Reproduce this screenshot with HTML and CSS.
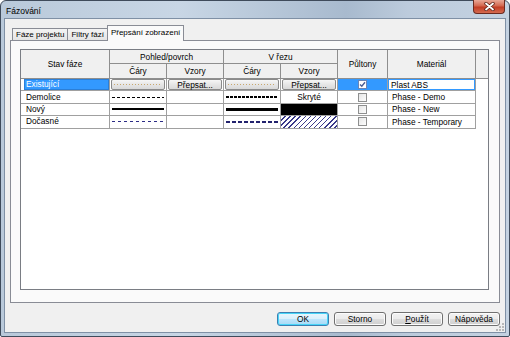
FILE: index.html
```html
<!DOCTYPE html>
<html lang="cs">
<head>
    <meta charset="UTF-8">
    <title>Fázování</title>
    <link rel="stylesheet" href="styles.css">
</head>
<body>
    <div class="window">
        <div class="titlebar">
            <span class="title">Fázování</span>
            <div class="close">
                <svg width="11" height="9" viewBox="0 0 11 9">
                    <path d="M2 1.5 L9 7.5 M9 1.5 L2 7.5" stroke="#5b2219" stroke-width="3.4" stroke-linecap="round"/>
                    <path d="M2 1.5 L9 7.5 M9 1.5 L2 7.5" stroke="#ffffff" stroke-width="1.8" stroke-linecap="round"/>
                </svg>
            </div>
        </div>

        <div class="client">
            <div class="tabs">
                <div class="tab">Fáze projektu</div>
                <div class="tab">Filtry fází</div>
                <div class="tab active">Přepsání zobrazení</div>
            </div>

            <div class="panel">
                <div class="grid">
                    <table>
                        <colgroup>
                            <col class="c-name">
                            <col class="c-std">
                            <col class="c-std">
                            <col class="c-std">
                            <col class="c-std">
                            <col class="c-half">
                            <col class="c-mat">
                            <col>
                        </colgroup>
                        <thead>
                            <tr class="head-1">
                                <th rowspan="2">Stav fáze</th>
                                <th colspan="2">Pohled/povrch</th>
                                <th colspan="2">V řezu</th>
                                <th rowspan="2">Půltony</th>
                                <th rowspan="2">Materiál</th>
                                <th rowspan="2" class="filler"></th>
                            </tr>
                            <tr class="head-2">
                                <th>Čáry</th>
                                <th>Vzory</th>
                                <th>Čáry</th>
                                <th>Vzory</th>
                            </tr>
                        </thead>
                        <tbody>
                            <tr>
                                <td class="name"><div class="sel">Existující</div></td>
                                <td><div class="cell-btn"><div class="ln ln-dot"></div></div></td>
                                <td><div class="cell-btn">Přepsat...</div></td>
                                <td><div class="cell-btn"><div class="ln ln-dot"></div></div></td>
                                <td><div class="cell-btn">Přepsat...</div></td>
                                <td class="check selected">
                                    <span class="cb cb-focus">
                                        <svg width="7" height="7" viewBox="0 0 7 7"><path d="M1 3.4 L2.8 5.3 L6 1.2" fill="none" stroke="#4c5f95" stroke-width="1.4"/></svg>
                                    </span>
                                </td>
                                <td class="mat editing">Plast ABS</td>
                                <td class="empty"></td>
                            </tr>
                            <tr>
                                <td class="name"><div>Demolice</div></td>
                                <td class="line"><div class="ln ln-dash"></div></td>
                                <td></td>
                                <td class="line"><div class="ln ln-dash-bold"></div></td>
                                <td class="center">Skryté</td>
                                <td class="check"><span class="cb"></span></td>
                                <td class="mat">Phase - Demo</td>
                                <td class="empty"></td>
                            </tr>
                            <tr>
                                <td class="name"><div>Nový</div></td>
                                <td class="line"><div class="ln ln-solid"></div></td>
                                <td></td>
                                <td class="line"><div class="ln ln-solid-bold"></div></td>
                                <td class="fill-black"></td>
                                <td class="check"><span class="cb"></span></td>
                                <td class="mat">Phase - New</td>
                                <td class="empty"></td>
                            </tr>
                            <tr>
                                <td class="name"><div>Dočasné</div></td>
                                <td class="line"><div class="ln ln-navy"></div></td>
                                <td></td>
                                <td class="line"><div class="ln ln-navy-bold"></div></td>
                                <td class="hatch"></td>
                                <td class="check"><span class="cb"></span></td>
                                <td class="mat">Phase - Temporary</td>
                                <td class="empty"></td>
                            </tr>
                        </tbody>
                    </table>
                </div>
            </div>

            <div class="buttons">
                <button class="btn default">OK</button>
                <button class="btn">Storno</button>
                <button class="btn"><u>P</u>oužít</button>
                <button class="btn">Nápověda</button>
            </div>

            <svg class="grip" width="8" height="8" viewBox="0 0 8 8">
                <rect x="6" y="0" width="2" height="2" fill="#b8b8b8"/>
                <rect x="3" y="3" width="2" height="2" fill="#b8b8b8"/>
                <rect x="6" y="3" width="2" height="2" fill="#b8b8b8"/>
                <rect x="0" y="6" width="2" height="2" fill="#b8b8b8"/>
                <rect x="3" y="6" width="2" height="2" fill="#b8b8b8"/>
                <rect x="6" y="6" width="2" height="2" fill="#b8b8b8"/>
            </svg>
        </div>
    </div>
</body>
</html>
```

FILE: styles.css
```css
body {
    margin: 0;
    font-family: "Liberation Sans", Arial, sans-serif;
    font-size: 8.3px;
    color: #000;
}
.window {
    width: 510px;
    height: 337px;
    box-sizing: border-box;
    border: 1px solid #3f4b5b;
    border-radius: 6px 6px 2px 2px;
    background: linear-gradient(90deg, #b9c9da, #c8d6e5 35%, #a8bace 68%, #bccbdc 80%, #c4d2e1);
    display: flex;
    flex-direction: column;
}
.titlebar {
    height: 17px;
    display: flex;
    align-items: flex-start;
}
.title {
    padding: 5px 0 0 5px;
    font-size: 8.5px;
}
.close {
    margin-left: auto;
    margin-right: 4px;
    width: 32px;
    height: 14px;
    margin-top: -1px;
    box-sizing: border-box;
    border: 1px solid #6a2a20;
    border-top: none;
    border-radius: 0 0 4px 4px;
    background: linear-gradient(#e9a897, #d3674f 45%, #c23c24 55%, #d46b50);
    display: flex;
    align-items: center;
    justify-content: center;
}
.client {
    flex: 1;
    margin: 0 3px 3px;
    border: 1px solid #7f90a5;
    background: #f0f0f0;
    display: flex;
    flex-direction: column;
    padding: 6px 5px;
    position: relative;
}
.tabs {
    height: 15px;
    display: flex;
    align-items: flex-end;
    padding-left: 2px;
    font-size: 8px;
}
.tab {
    height: 12px;
    box-sizing: border-box;
    padding: 0 3px;
    border: 1px solid #898c95;
    border-bottom: none;
    border-right: none;
    background: linear-gradient(#f4f4f4, #e4e4e4);
    display: flex;
    align-items: center;
    white-space: nowrap;
}
.tab + .tab.active {
    border-left: 1px solid #898c95;
}
.tab.active {
    height: 16px;
    margin-bottom: -1px;
    border-right: 1px solid #898c95;
    background: #fafafa;
    padding: 0 3px 2px;
    position: relative;
    z-index: 1;
}
.panel {
    flex: 1;
    border: 1px solid #898c95;
    background: #fafafa;
    padding: 8px 10px 12px 9px;
    display: flex;
}
.grid {
    flex: 1;
    border: 1px solid #7a7d84;
    background: #fff;
}
table {
    width: 100%;
    table-layout: fixed;
    border-collapse: separate;
    border-spacing: 0;
}
.c-name { width: 89px; }
.c-std { width: 57px; }
.c-half { width: 50px; }
.c-mat { width: 88px; }
th, td {
    box-sizing: border-box;
    padding: 0;
    border-right: 1px solid #a0a0a0;
    border-bottom: 1px solid #a0a0a0;
    font-weight: normal;
    white-space: nowrap;
    overflow: hidden;
}
th {
    background: #f0f0f0;
    text-align: center;
    border-color: #8e8e8e;
}
.head-1 { height: 14px; }
.head-2 { height: 15px; }
tbody tr { height: 12.4px; }
td.empty {
    border: none;
}
th.filler {
    border-right: none;
}
.name {
    padding: 0 0 0 3px;
}
.name div {
    padding-left: 2px;
    height: 11px;
    line-height: 11px;
}
.name .sel {
    background: #3399ff;
    color: #fff;
    box-shadow: inset 0 0 0 1px #2b7fd8;
}
.line {
    padding: 0 2px;
}
.ln {
    width: 100%;
}
.ln-dot {
    height: 1px;
    background: repeating-linear-gradient(90deg, #c9a86e 0 1px, transparent 1px 3px);
}
.ln-dash {
    height: 1px;
    background: repeating-linear-gradient(90deg, #000 0 3px, transparent 3px 5px);
}
.ln-dash-bold {
    height: 2px;
    background: repeating-linear-gradient(90deg, #000 0 3px, transparent 3px 4px);
}
.ln-solid {
    height: 2px;
    background: #000;
}
.ln-solid-bold {
    height: 3px;
    background: #000;
}
.ln-navy {
    height: 1px;
    background: repeating-linear-gradient(90deg, #2c2c86 0 3px, transparent 3px 6px);
}
.ln-navy-bold {
    height: 2px;
    background: repeating-linear-gradient(90deg, #22226e 0 4px, transparent 4px 6px);
}
.cell-btn {
    height: 11px;
    box-sizing: border-box;
    margin: 0 1px;
    border: 1px solid #8a8a8a;
    border-radius: 2px;
    background: linear-gradient(#f6f6f6, #e6e6e6 50%, #d9d9d9);
    display: flex;
    align-items: center;
    justify-content: center;
    padding: 0 2px;
}
.center {
    text-align: center;
}
.fill-black {
    background: #000;
}
.hatch {
    background: repeating-linear-gradient(135deg, #fff 0 2.6px, #3a3a8a 2.6px 3.6px);
}
.check {
    text-align: center;
    line-height: 0;
}
.check.selected {
    background: #3399ff;
}
.cb {
    display: inline-block;
    width: 9px;
    height: 9px;
    box-sizing: border-box;
    border: 1px solid #8e8f8f;
    background: linear-gradient(135deg, #e6e6e6, #fdfdfd);
    vertical-align: middle;
}
.cb-focus {
    border-color: #6a85b5;
    background: #fff;
}
.cb svg {
    display: block;
}
.mat {
    padding-left: 4px;
}
.mat.editing {
    box-shadow: inset 0 0 0 1px #3399ff;
    padding-left: 3px;
}
.buttons {
    margin-top: 9px;
    display: flex;
    justify-content: flex-end;
    gap: 5px;
}
.btn {
    width: 52px;
    height: 14px;
    padding: 0;
    font-family: inherit;
    font-size: 8.3px;
    color: #000;
    border: 1px solid #707070;
    border-radius: 3px;
    background: linear-gradient(#f2f2f2, #ebebeb 50%, #dddddd 50%, #cfcfcf);
    box-shadow: inset 0 0 0 1px #fcfcfc;
}
.btn.default {
    border-color: #3c7fb1;
    background: linear-gradient(#eaf6fd, #d9f0fc 50%, #bee6fd 50%, #a7d9f5);
    box-shadow: inset 0 0 0 1px #48d5f8;
}
.grip {
    position: absolute;
    right: 1px;
    bottom: 1px;
}
```
